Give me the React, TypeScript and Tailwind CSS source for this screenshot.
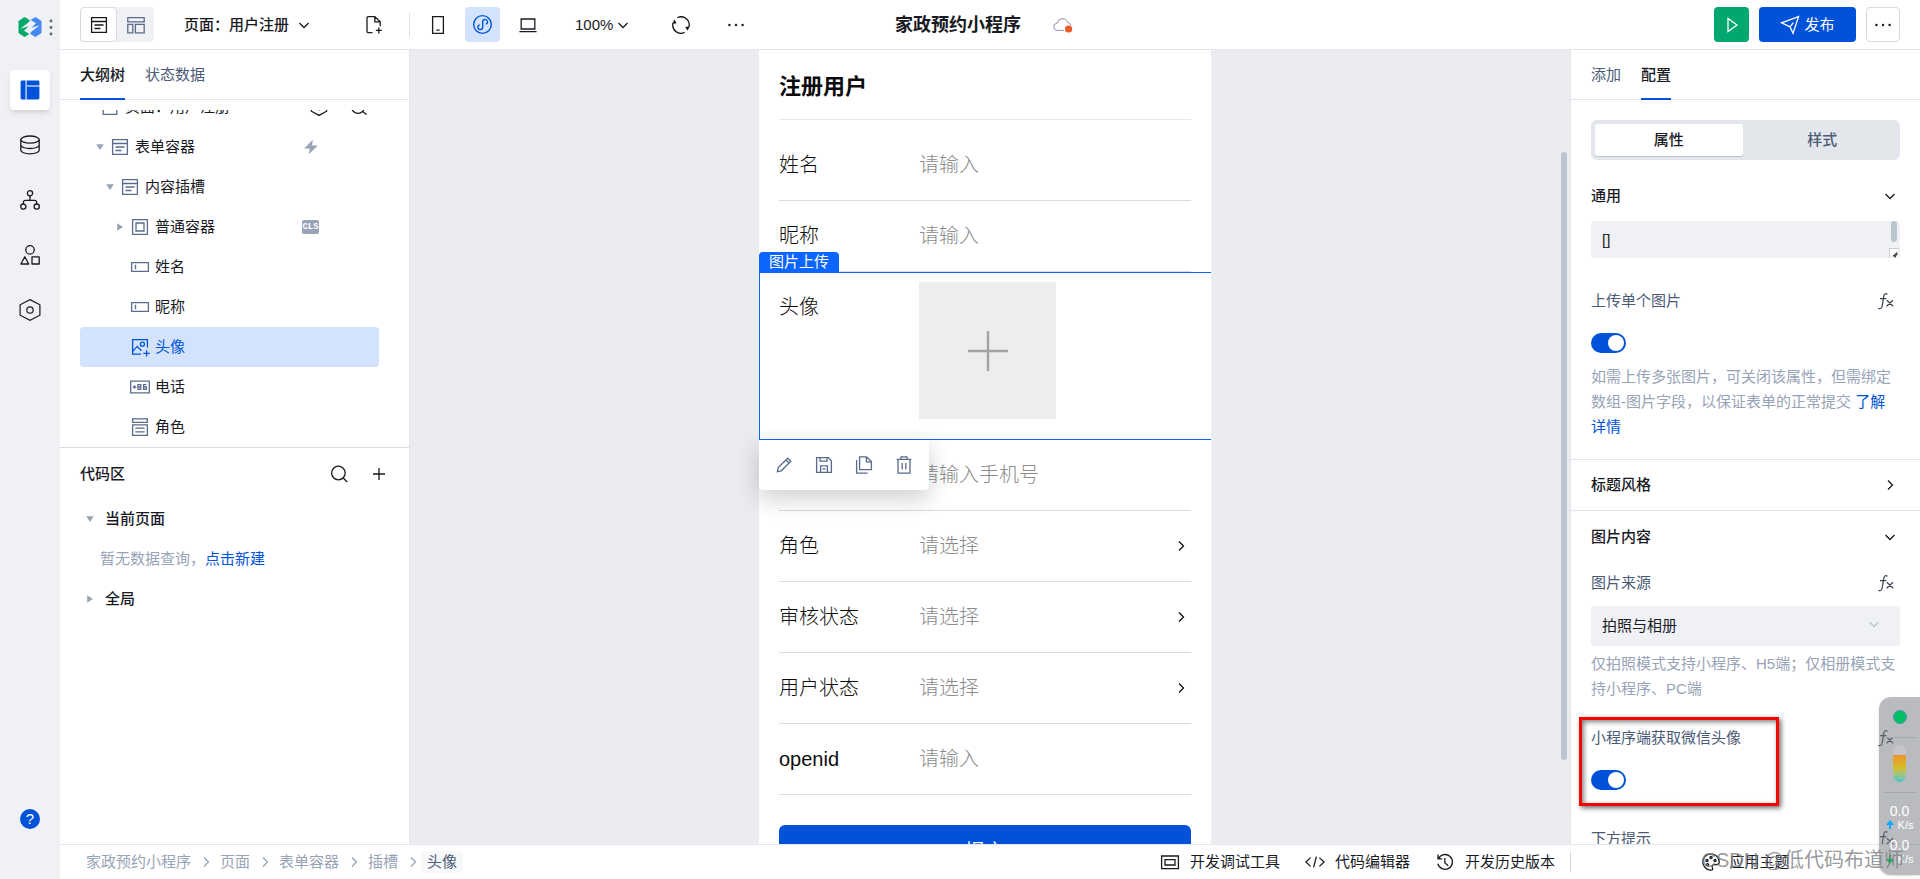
import { useState } from "react"
import type { ReactNode } from "react"
import clsx from "clsx"

type IconProps = { className?: string; children?: ReactNode; strokeWidth?: number }

// 20x20 线性图标的公共外壳
function Icon({ className, children, strokeWidth = 1.3 }: IconProps) {
  return (
    <svg
      viewBox="0 0 20 20"
      className={clsx("shrink-0", className || "size-5")}
      fill="none"
      stroke="currentColor"
      strokeWidth={strokeWidth}
      aria-hidden="true"
    >
      {children}
    </svg>
  )
}

const ChevronDown = ({ className = "size-5" }: { className?: string }) => (
  <Icon className={className}><path d="M5.5 8 10 12.5 14.5 8" /></Icon>
)

const ChevronRight = ({ className = "size-5" }: { className?: string }) => (
  <Icon className={className}><path d="M8 5.5 12.5 10 8 14.5" /></Icon>
)

const FormIcon = ({ className }: { className?: string }) => (
  <Icon className={className}><path d="M2.6 2.6h14.8v14.8H2.6zM2.6 6.5h14.8M5.5 10h9M5.5 13.5h6" /></Icon>
)

const InputIcon = () => (
  <Icon><path d="M1.6 5.6h16.8v8.8H1.6zM5.5 7.8v4.4" /></Icon>
)

const Dots = () => (
  <Icon>
    <g fill="currentColor" stroke="none">
      <circle cx="3.4" cy="10" r="1.2" />
      <circle cx="10" cy="10" r="1.2" />
      <circle cx="16.6" cy="10" r="1.2" />
    </g>
  </Icon>
)

const SearchIcon = () => (
  <Icon><circle cx="9.4" cy="9" r="6.8" /><path d="m14.2 14 4 4" /></Icon>
)

function Arrow({ open }: { open?: boolean }) {
  return (
    <svg viewBox="0 0 10 10" className="size-[10px] shrink-0 text-[#97a3b7]" fill="currentColor" aria-hidden="true">
      {open ? <path d="M1.2 2.2h7.6L5 8z" /> : <path d="M2.2 1.2v7.6L8 5z" />}
    </svg>
  )
}

function Fx() {
  return (
    <button type="button" aria-label="绑定表达式" className="flex size-5 items-center justify-center text-[#3b424f]">
      <Icon strokeWidth={1.2}>
        <path d="M12.6 3.2c-2.6-1.4-3.6.2-4 3L7.2 14.800c-.5 2.600-1.600 3.400-3.800 2.600M5 7.600h6.400M11.800 9.200l6.400 6M18 9.200l-6.400 6" />
      </Icon>
    </button>
  )
}

function Logo() {
  return (
    <svg viewBox="0 0 24 20" className="h-5 w-6" aria-hidden="true">
      <path d="M.5 4 6.500 0l5 3v1.400L2.500 11.800l8.200-2.600L6 13.800l5.500 3.200-5 3-6-4z" fill="#07a86b" />
      <path d="M23.500 16l-6 4-5-3v-1.400l9-7.400-8.200 2.600L18 6.200 12.500 3l5-3 6 4z" fill="#4688f1" />
    </svg>
  )
}

const NAV = [
  {
    name: "页面",
    icon: (
      <svg viewBox="0 0 20 20" className="size-5" aria-hidden="true">
        <path fill="#0052d9" d="M2 .6h3.6v18.8H2A1.4 1.4 0 0 1 .6 18V2A1.4 1.4 0 0 1 2 .6zM6.8.6H18A1.4 1.4 0 0 1 19.4 2v3.4H6.8zM6.8 6.6h12.6V18a1.4 1.4 0 0 1-1.4 1.4H6.8z" />
        <path fill="#8fb3f0" d="M5.6.6h1.2v18.8H5.6zM6.8 5.4h12.6v1.2H6.8z" />
      </svg>
    ),
  },
  {
    name: "数据",
    icon: (
      <Icon>
        <ellipse cx="10" cy="4.6" rx="9.2" ry="3.6" />
        <path d="M.8 4.6v10.6c0 2 4.1 3.6 9.2 3.6s9.2-1.6 9.2-3.6V4.6M.8 10c0 2 4.1 3.5 9.2 3.5s9.2-1.5 9.2-3.5" />
      </Icon>
    ),
  },
  {
    name: "流程",
    icon: (
      <Icon>
        <circle cx="10" cy="3.3" r="2.6" />
        <circle cx="3.3" cy="16.6" r="2.6" />
        <circle cx="16.7" cy="16.6" r="2.6" />
        <path d="M10 6v4.4M3.4 14v-1.6a2 2 0 0 1 2-2h9.2a2 2 0 0 1 2 2V14" />
      </Icon>
    ),
  },
  {
    name: "组件",
    icon: (
      <Icon>
        <circle cx="10" cy="4.9" r="4.2" />
        <path d="M4.8 11.8.9 19h7.8zM12 11.8h7.2V19H12z" strokeLinejoin="round" />
      </Icon>
    ),
  },
  {
    name: "设置",
    icon: (
      <Icon className="size-[22px]" strokeWidth={1.1}>
        <path d="M10 .6 19 5.300v9.400L10 19.400 1 14.700V5.300z" />
        <circle cx="10" cy="10" r="2.9" />
      </Icon>
    ),
  },
]

function Sidebar() {
  return (
    <nav className="flex w-[60px] shrink-0 flex-col items-center bg-[#f0f1f5] pb-[50px] pt-4 text-[#181a1f]">
      <div className="mb-8 flex h-[22px] w-full items-center gap-1 pl-[18px]">
        <Logo />
        <svg viewBox="0 0 10 20" className="h-5 w-[10px]" fill="#5a6578" aria-hidden="true">
          <circle cx="5" cy="4" r="1.4" />
          <circle cx="5" cy="10.5" r="1.4" />
          <circle cx="5" cy="17" r="1.4" />
        </svg>
      </div>
      <div className="flex flex-col gap-[15px]">
        {NAV.map((item, i) => (
          <button
            key={item.name}
            type="button"
            aria-label={item.name}
            className={clsx("flex size-10 items-center justify-center rounded", i === 0 && "bg-white shadow-md")}
          >
            {item.icon}
          </button>
        ))}
      </div>
      <button type="button" aria-label="帮助" className="mt-auto flex size-5 items-center justify-center rounded-full bg-[#0052d9] text-[15px] leading-5 text-white">
        ?
      </button>
    </nav>
  )
}

function Divider() {
  return <span className="h-6 w-px bg-[#dcdfe6]" />
}

function Header() {
  return (
    <header className="grid h-[50px] shrink-0 grid-cols-[1fr_auto_1fr] items-center border-b border-[#e3e5ea] bg-white px-5">
      <div className="flex items-center">
        <div className="flex rounded bg-[#f0f1f5]">
          <button type="button" aria-label="列表视图" className="flex h-[35px] w-[37px] items-center justify-center rounded border border-[#d5dae3] bg-white">
            <FormIcon />
          </button>
          <button type="button" aria-label="布局视图" className="flex h-[35px] w-[37px] items-center justify-center text-[#5a6b8c]">
            <Icon><path d="M1.8 2.6h16.4v4.2H1.8zM1.8 9.4h5v8.4h-5zM9.4 9.4h8.8v8.4H9.4z" /></Icon>
          </button>
        </div>
        <button type="button" className="ml-[30px] flex items-center gap-[5px] font-medium">
          页面：用户注册
          <ChevronDown />
        </button>
        <button type="button" aria-label="新建页面" className="ml-[50px]">
          <Icon>
            <path d="M8.5 17.6H4.4a1.4 1.4 0 0 1-1.4-1.4V3A1.4 1.4 0 0 1 4.4 1.6h6.4l5.4 5.2v4.4M10.8 1.8v5h5.2M14.8 12.4v6M11.8 15.4h6" />
          </Icon>
        </button>
        <div className="ml-[25px] flex items-center">
          <Divider />
          <div className="ml-[10px] flex gap-[10px]">
            <button type="button" aria-label="手机" className="flex size-[35px] items-center justify-center">
              <Icon><path d="M4.6 1.7h10.8v16.6H4.6zM8.4 15.2h3.2" /></Icon>
            </button>
            <button type="button" aria-label="小程序" className="flex size-[35px] items-center justify-center rounded bg-[#d3e3fd] text-[#0052d9]">
              <Icon className="size-[21px]">
                <circle cx="10" cy="10" r="8.4" />
                <path d="M10.2 12.2V7.4a2.3 2.3 0 1 1 2.9 2.3M10.2 7.8v4.8a2.3 2.3 0 1 1-2.9-2.3" />
              </Icon>
            </button>
            <button type="button" aria-label="电脑" className="flex size-[35px] items-center justify-center">
              <Icon><path d="M3.2 4h13.6v10H3.2zM1.4 16.6h17.2" /></Icon>
            </button>
          </div>
          <span className="ml-2"><Divider /></span>
        </div>
        <button type="button" className="ml-[22px] flex items-center">
          100%
          <ChevronDown />
        </button>
        <span className="ml-5"><Divider /></span>
        <button type="button" aria-label="刷新" className="ml-[18px]">
          <Icon>
            <path d="M6.4 2.6a8.2 8.2 0 0 1 11.6 9.2M13.6 17.4A8.2 8.2 0 0 1 2 8.2M2 12.4a8.2 8.2 0 0 0 9.8 5.8M18 7.6A8.2 8.2 0 0 0 8.2 2" />
            <path d="m1.2 9 2.2-4.4 2.2 3.6zM18.8 11.2l-2.2 4.6-2.4-3.8z" fill="currentColor" stroke="none" />
          </Icon>
        </button>
        <button type="button" aria-label="更多操作" className="ml-[35px]"><Dots /></button>
      </div>
      <div className="flex items-center gap-8 pr-3">
        <h1 className="text-[18px] font-bold">家政预约小程序</h1>
        <svg viewBox="0 0 20 16" className="h-4 w-5" fill="none" aria-hidden="true">
          <path d="M11 13.4H4.6a3.6 3.6 0 0 1-.5-7.2 5.4 5.4 0 0 1 10.5-.6 3.8 3.8 0 0 1 3.4 2.8" stroke="#8a93a3" />
          <circle cx="15.6" cy="12" r="3.6" fill="#ea5b28" />
        </svg>
      </div>
      <div className="flex items-center justify-end gap-[10px]">
        <button type="button" aria-label="预览" className="flex size-[35px] items-center justify-center rounded bg-[#00a870] text-white">
          <Icon><path d="M6 3.5v13l9-6.5z" /></Icon>
        </button>
        <button type="button" className="flex h-[35px] w-[97px] items-center justify-center gap-1 rounded bg-[#0052d9] text-white">
          <Icon><path d="M1.4 7.8 18.6 1.6 13 18.2l-3-6.4zM10 11.8l3.4-4.2M6.4 10l3.6 1.8" /></Icon>
          发布
        </button>
        <button type="button" aria-label="更多" className="flex h-[35px] w-[34px] items-center justify-center rounded border border-[#d5dae3]">
          <Dots />
        </button>
      </div>
    </header>
  )
}

type Node = { name: string; pad: string; arrow?: "open" | "closed"; icon: ReactNode; extra?: ReactNode; active?: boolean }

const TREE: Node[] = [
  {
    name: "表单容器", pad: "pl-[15px]", arrow: "open", icon: <FormIcon />,
    extra: (
      <svg viewBox="0 0 16 16" className="size-4 text-[#97a3b7]" fill="currentColor" aria-hidden="true">
        <path d="M9.8.8 1 9.400h5.800L5.800 15.200l9-8.800H9z" />
      </svg>
    ),
  },
  { name: "内容插槽", pad: "pl-[25px]", arrow: "open", icon: <FormIcon /> },
  {
    name: "普通容器", pad: "pl-[35px]", arrow: "closed",
    icon: <Icon><path d="M2.6 2.6h14.8v14.8H2.6zM6 6h8v8H6z" /></Icon>,
    extra: <span className="flex h-[14px] w-[17px] items-center justify-center rounded-[2px] bg-[#97a3b7] font-['Liberation_Mono',monospace] text-[9px] font-bold leading-none text-white">CLS</span>,
  },
  { name: "姓名", pad: "pl-[35px]", icon: <InputIcon /> },
  { name: "昵称", pad: "pl-[35px]", icon: <InputIcon /> },
  {
    name: "头像", pad: "pl-[35px]", active: true,
    icon: (
      <Icon>
        <path d="M11 17.2H2.6V2.6h14.8v8M2.8 14.4l4.4-5 4.2 4.4M16.6 13.2v6.2M13.4 16.3h6.4" />
        <circle cx="12.4" cy="7.2" r="2" />
      </Icon>
    ),
  },
  {
    name: "电话", pad: "pl-[35px]",
    icon: (
      <Icon>
        <path d="M.7 4.2h18.6v11.6H.7z" />
        <path d="M2.8 10h3.4M4.5 8.3v3.4M8 7.6h2.8v4.8H8zM8 10h2.8M16.4 7.6h-2.8v4.8h2.8V10h-2.8" />
      </Icon>
    ),
  },
  {
    name: "角色", pad: "pl-[35px]",
    icon: <Icon><path d="M2.6 1.8h14.8v3.6H2.6zM2.6 7.8h14.8v10.6H2.6zM5.4 11.2h9.2M5.4 14.8h9.2" /></Icon>,
  },
]

function LeftPanel() {
  return (
    <aside className="flex w-[350px] shrink-0 flex-col border-r border-[#e3e5ea] bg-white">
      <div className="flex h-[50px] shrink-0 gap-5 border-b border-[#e3e5ea] px-5">
        <button type="button" className="-mb-px border-b-2 border-[#0052d9] pt-[2px] font-medium">大纲树</button>
        <button type="button" className="-mb-px border-b-2 border-transparent pt-[2px] text-[#4b5b76]">状态数据</button>
      </div>
      <div className="mt-[10px] flex h-[337px] shrink-0 flex-col justify-end overflow-hidden px-5">
        <ul>
          <li className="flex h-10 items-center gap-[5px] pl-5">
            <Icon className="size-5 text-[#5a6b8c]"><path d="M3.2 2.6h13.6v14.8H3.2z" /></Icon>
            <span className="flex-1">页面：用户注册</span>
            <span className="flex gap-5 pr-5">
              <Icon><path d="M2.4 5.4 10 1.6l7.6 3.8v8.8L10 18.4l-7.6-4.2z" /><circle cx="10" cy="10" r="2.6" /></Icon>
              <Icon><circle cx="9" cy="10" r="6.4" /><path d="m13.6 14.6 4 3" /></Icon>
            </span>
          </li>
          {TREE.map((node) => (
            <li
              key={node.name}
              className={clsx(
                "mr-[10px] flex h-10 items-center rounded",
                node.pad,
                node.active && "bg-[#d3e3fd] text-[#0052d9]"
              )}
            >
              <span className="mr-[5px] w-[10px]">{node.arrow && <Arrow open={node.arrow === "open"} />}</span>
              <span className={clsx(!node.active && "text-[#5a6b8c]")}>{node.icon}</span>
              <span className="ml-[5px] flex-1">{node.name}</span>
              <span className="mr-[60px] flex w-[17px] justify-center">{node.extra}</span>
            </li>
          ))}
        </ul>
      </div>
      <section className="flex-1 border-t border-[#d5dae3] pl-5">
        <div className="flex h-[51px] items-center">
          <h2 className="flex-1 font-medium">代码区</h2>
          <button type="button" aria-label="搜索" className="mr-5"><SearchIcon /></button>
          <button type="button" aria-label="新建" className="mr-5"><Icon><path d="M10 4v12M4 10h12" /></Icon></button>
        </div>
        <div className="flex h-10 items-center gap-[10px] pl-[5px] font-medium"><Arrow open />当前页面</div>
        <div className="flex h-10 items-center pl-5 text-[#97a3b7]">
          暂无数据查询，<a href="#new" className="text-[#0052d9]">点击新建</a>
        </div>
        <div className="flex h-10 items-center gap-[10px] pl-[5px] font-medium"><Arrow />全局</div>
      </section>
    </aside>
  )
}

type Field = { id: string; label: string; select?: boolean; hint: string }

function FieldRow({ id, label, select, hint }: Field) {
  return (
    <div className="mx-5 flex h-[71px] items-center border-b border-[#dcdcdc] text-[20px] font-light">
      <label htmlFor={id} className="w-[140px] shrink-0">{label}</label>
      {select ? (
        <>
          <select id={id} defaultValue="" className="h-10 flex-1 appearance-none text-[#8c8c8c]">
            <option value="">{hint}</option>
          </select>
          <ChevronRight />
        </>
      ) : (
        <input id={id} placeholder={hint} className="h-10 w-0 flex-1 outline-none placeholder:text-[#8c8c8c]" />
      )}
    </div>
  )
}

const FLOAT_TOOLS = [
  { name: "编辑", icon: <path d="m3.4 16.6.8-4 9.6-9.4 3 3-9.6 9.6zM12 5l3 3" /> },
  { name: "保存", icon: <path d="M2.6 2.6h11.6l3.2 3.2v11.6H2.6zM6.6 17.2v-6.4h6.8v6.4M6 2.8v3.4h7V2.8M8.6 14h2.8" /> },
  { name: "复制", icon: <path d="M5.6 1.8h7l4.8 4.8v8H5.6zM12.4 2v4.8h4.8M2.6 5v13.2h11" /> },
  { name: "删除", icon: <path d="M2.6 4.4h14.8M4 4.6v13.6h12V4.6M7 4.2V1.9h6v2.3M8.2 8v6.4M11.8 8v6.4" /> },
]

function Canvas() {
  return (
    <main className="flex flex-1 overflow-hidden bg-[#ebecf0]">
      <div className="flex flex-1 justify-center overflow-hidden">
        <form className="w-[452px] shrink-0 bg-white text-[#0c0c0c]">
          <h2 className="mx-5 flex h-[70px] items-center border-b border-[#e7e7e7] pt-1 text-[22px] font-bold">注册用户</h2>
          <div className="pt-[10px]">
            <FieldRow id="name" label="姓名" hint="请输入" />
            <FieldRow id="nick" label="昵称" hint="请输入" />
          </div>
          <div className="relative h-[168px] border-y border-l border-[#0b66ff]">
            <span className="absolute -left-px -top-[21px] flex h-5 w-20 items-center justify-center rounded-t bg-[#0b66ff] text-white">图片上传</span>
            <div className="flex pl-[19px] pt-[9px]">
              <label htmlFor="avatar" className="w-[140px] pt-[10px] text-[20px] font-light leading-[30px]">头像</label>
              <button id="avatar" type="button" className="flex size-[137px] items-center justify-center bg-[#ededed] text-[#a3a3a3]">
                <svg viewBox="0 0 40 40" className="size-10" stroke="currentColor" strokeWidth="2.4" aria-hidden="true">
                  <path d="M20 0v40M0 20h40" />
                </svg>
              </button>
            </div>
            <div className="absolute -left-px top-full z-10 mt-px flex h-[50px] w-[170px] items-center justify-between rounded-b bg-white px-[15px] text-[#5a6b8c] shadow-[0_8px_24px_rgba(0,0,0,0.2)]">
              {FLOAT_TOOLS.map((tool) => (
                <button key={tool.name} type="button" aria-label={tool.name}><Icon>{tool.icon}</Icon></button>
              ))}
            </div>
          </div>
          <FieldRow id="phone" label="电话" hint="请输入手机号" />
          <FieldRow id="role" label="角色" hint="请选择" select />
          <FieldRow id="audit" label="审核状态" hint="请选择" select />
          <FieldRow id="status" label="用户状态" hint="请选择" select />
          <FieldRow id="openid" label="openid" hint="请输入" />
          <div className="px-5 pt-[30px]">
            <button type="button" className="h-[54px] w-full rounded-md bg-[#0052d9] text-[20px] text-white">提交</button>
          </div>
        </form>
      </div>
      <div className="w-[10px] shrink-0 pt-[102px]">
        <div className="ml-px h-[608px] w-[6px] rounded-full bg-[#bcc4d0]" />
      </div>
    </main>
  )
}

function Toggle({ id, label }: { id: string; label: string }) {
  const [on, setOn] = useState(true)
  return (
    <div>
      <div className="flex h-10 items-center justify-between pr-[5px]">
        <label htmlFor={id} className="text-[#4b5b76]">{label}</label>
        <Fx />
      </div>
      <input
        id={id}
        type="checkbox"
        role="switch"
        checked={on}
        onChange={() => setOn(!on)}
        className="mt-3 block h-5 w-[35px] appearance-none rounded-full bg-[#bcc4d0] before:m-[2px] before:block before:size-4 before:rounded-full before:bg-white checked:bg-[#0052d9] checked:before:ml-[17px]"
      />
    </div>
  )
}

function RightPanel() {
  return (
    <aside className="flex w-[350px] shrink-0 flex-col border-l border-[#e3e5ea] bg-white">
      <div className="flex h-[50px] shrink-0 gap-5 border-b border-[#e3e5ea] px-5">
        <button type="button" className="-mb-px border-b-2 border-transparent pt-[2px] text-[#4b5b76]">添加</button>
        <button type="button" className="-mb-px border-b-2 border-[#0052d9] pt-[2px] font-medium">配置</button>
      </div>
      <div className="flex-1 overflow-hidden pb-5">
        <section className="border-b border-[#e3e5ea] px-5 pb-5 pt-5">
          <div className="flex h-10 gap-[6px] rounded-md bg-[#e3e6eb] p-1 font-medium">
            <button type="button" className="flex-1 rounded-[3px] bg-white shadow-[0_1px_0_#bcc4d0]">属性</button>
            <button type="button" className="flex-1 text-[#4b5b76]">样式</button>
          </div>
          <div className="mt-4 flex h-10 items-center justify-between font-medium">
            <h3>通用</h3>
            <ChevronDown />
          </div>
          <div className="relative mt-[5px] h-[37px]">
            <textarea aria-label="值" defaultValue="[]" className="block h-full w-full resize-none overflow-hidden rounded bg-[#f0f1f5] px-[11px] py-[7px] leading-[23px] outline-none" />
            <span className="absolute right-[3px] top-0 h-[21px] w-[6px] rounded-full bg-[#bcc4d0]" />
            <svg viewBox="0 0 10 10" className="absolute bottom-0 right-px size-[10px]" aria-hidden="true">
              <path d="M.5 10V.5H10" fill="#fff" stroke="#c9ced8" />
              <path d="M4 7h1.500v1.500H4zM5.500 5.500H7v4H5.500zM7 4.500h1.300v3H7z" fill="#444" />
            </svg>
          </div>
          <div className="mt-[23px]"><Toggle id="single" label="上传单个图片" /></div>
          <p className="mt-[11px] leading-[25px] text-[#97a3b7]">
            如需上传多张图片，可关闭该属性，但需绑定数组-图片字段，以保证表单的正常提交 <a href="#more" className="text-[#0052d9]">了解详情</a>
          </p>
        </section>
        <section className="flex h-[51px] items-center justify-between border-b border-[#e3e5ea] px-5 font-medium">
          <h3>标题风格</h3>
          <ChevronRight />
        </section>
        <section className="px-5 pt-[6px]">
          <div className="flex h-10 items-center justify-between font-medium">
            <h3>图片内容</h3>
            <ChevronDown />
          </div>
          <div className="mt-[6px] flex h-10 items-center justify-between pr-[5px]">
            <label htmlFor="source" className="text-[#4b5b76]">图片来源</label>
            <Fx />
          </div>
          <div className="relative mt-[3px]">
            <select id="source" className="h-10 w-full appearance-none rounded bg-[#f0f1f5] px-[11px]">
              <option>拍照与相册</option>
            </select>
            <ChevronDown className="pointer-events-none absolute right-4 top-2 size-5 text-[#bcc4d0]" />
          </div>
          <p className="mt-[5px] leading-[25px] text-[#97a3b7]">仅拍照模式支持小程序、H5端；仅相册模式支持小程序、PC端</p>
          <div className="relative mt-[17px]">
            <Toggle id="wx-avatar" label="小程序端获取微信头像" />
            {/* 标注框 */}
            <div className="pointer-events-none absolute -left-3 -top-px h-[89px] w-[200px] border-3 border-[#ff0000] shadow-[2px_2px_5px_rgba(0,0,0,0.6),inset_2px_2px_5px_rgba(0,0,0,0.5)]" />
          </div>
          <div className="mt-[29px] flex h-10 items-center justify-between pr-[5px]">
            <span className="text-[#4b5b76]">下方提示</span>
            <Fx />
          </div>
        </section>
      </div>
    </aside>
  )
}

const CRUMBS = ["家政预约小程序", "页面", "表单容器", "插槽"]

function Footer() {
  return (
    <footer className="flex h-[35px] shrink-0 items-center border-t border-[#e3e5ea] bg-white pb-px">
      <nav className="flex flex-1 items-center pl-[26px] text-[#97a3b7]">
        {CRUMBS.map((name) => (
          <span key={name} className="flex items-center">
            <a href="#crumb">{name}</a>
            <ChevronRight className="ml-[5px] mr-1 size-5" />
          </span>
        ))}
        <span className="-ml-[6px] rounded-sm bg-[#f7f8fa] px-[6px] text-[#4b5b76]">头像</span>
      </nav>
      <div className="flex items-center gap-[25px] pr-[15px]">
        <button type="button" className="flex items-center gap-[10px]">
          <Icon><path d="M1.6 4h16.8v12.6H1.6zM5 7.6h10v5.4H5z" /></Icon>
          开发调试工具
        </button>
        <button type="button" className="flex items-center gap-[10px]">
          <Icon><path d="M5.6 5.6.9 10l4.7 4.4M14.4 5.6l4.7 4.4-4.7 4.4M11.4 4.6 8.6 15.4" /></Icon>
          代码编辑器
        </button>
        <button type="button" className="flex items-center gap-[10px]">
          <Icon><path d="M3.4 6.6a7.4 7.4 0 1 1-.6 5M3 2.6v4.2h4.2M9.8 6v4.6l3.4 3.2" /></Icon>
          开发历史版本
        </button>
      </div>
      <div className="flex w-[350px] justify-center border-l border-[#d5dae3]">
        <button type="button" className="flex items-center gap-2">
          <Icon>
            <path d="M10 1.8a8.2 8.2 0 1 0 0 16.4c1.8 0 2-1.2 1.4-2.4-.8-1.8.2-3.2 2-3.2h2.4c1.6 0 2.4-1 2.4-2.6C18.2 5.4 14.5 1.8 10 1.8z" />
            <circle cx="6" cy="8.4" r="1.1" />
            <circle cx="10" cy="5.6" r="1.1" />
            <circle cx="14" cy="8.4" r="1.1" />
            <circle cx="6.6" cy="12.8" r="1.1" />
          </Icon>
          应用主题
        </button>
      </div>
    </footer>
  )
}

// 桌面悬浮的网速监控
function Monitor() {
  return (
    <div className="pointer-events-none absolute bottom-1 right-0 flex h-[178px] w-[41px] flex-col items-center rounded-l-xl bg-[rgba(118,120,128,0.5)] text-white shadow-sm">
      <span className="mt-[13px] size-[14px] rounded-full border border-[#4c8fbf] bg-[#00c060]" />
      <span className="mt-[13px] h-px w-8 bg-[#a4aab2]" />
      <span className="mt-[7px] flex h-[37px] w-[13px] flex-col justify-end overflow-hidden rounded-full bg-[#c4c5c9]">
        <span className="h-[27px] bg-linear-to-b from-[#ee9428] via-[#cfc02c] to-[#3cc4c8]" />
      </span>
      <span className="mt-[10px] h-px w-8 bg-[#a4aab2]" />
      <span className="mt-[9px] text-[14px] leading-[18px]">0.0</span>
      <span className="flex items-center gap-1 text-[11px] leading-[10px]">
        <svg viewBox="0 0 8 10" className="h-[10px] w-2" fill="#10a8ff" aria-hidden="true"><path d="M4 0 8 5H5v4H3V5H0z" /></svg>
        K/s
      </span>
      <span className="mt-[6px] text-[14px] leading-[18px]">0.0</span>
      <span className="flex items-center gap-1 text-[11px] leading-[10px]">
        <svg viewBox="0 0 8 10" className="h-[10px] w-2" fill="#08b060" aria-hidden="true"><path d="M4 10 0 5h3V1h2v4h3z" /></svg>
        K/s
      </span>
    </div>
  )
}

export default function App() {
  return (
    <div className="relative flex h-screen overflow-hidden bg-white font-['Liberation_Sans','Noto_Sans_CJK_SC',sans-serif] text-[15px] leading-[22px] text-[#181a1f]">
      <Sidebar />
      <div className="flex min-w-0 flex-1 flex-col">
        <Header />
        <div className="flex min-h-0 flex-1">
          <LeftPanel />
          <Canvas />
          <RightPanel />
        </div>
        <Footer />
      </div>
      <Monitor />
      <span className="pointer-events-none absolute bottom-1 right-4 text-[20px] leading-[30px] text-[#7d7f84]/80">CSDN @低代码布道师</span>
    </div>
  )
}
